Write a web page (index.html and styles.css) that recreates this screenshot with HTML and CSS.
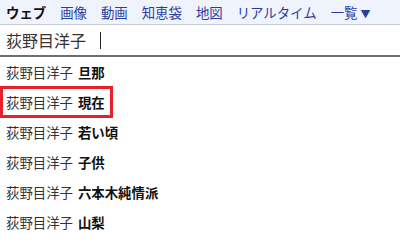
FILE: index.html
```html
<!DOCTYPE html>
<html lang="ja">
<head>
  <meta charset="UTF-8">
  <title>検索</title>
  <link rel="stylesheet" href="styles.css">
</head>
<body>
  <!-- Search tabs -->
  <div class="tabs">
    <span class="tab active">ウェブ</span>
    <span class="tab">画像</span>
    <span class="tab">動画</span>
    <span class="tab">知恵袋</span>
    <span class="tab">地図</span>
    <span class="tab">リアルタイム</span>
    <span class="tab">一覧<span class="arrow">▼</span></span>
  </div>

  <!-- Query box -->
  <div class="query">
    <span class="query-text">荻野目洋子</span>
    <span class="caret"></span>
  </div>

  <!-- Suggestions -->
  <ul class="suggest">
    <li><span class="item">荻野目洋子 <b>旦那</b></span></li>
    <li><span class="item marked">荻野目洋子 <b>現在</b></span></li>
    <li><span class="item">荻野目洋子 <b>若い頃</b></span></li>
    <li><span class="item">荻野目洋子 <b>子供</b></span></li>
    <li><span class="item">荻野目洋子 <b>六本木純情派</b></span></li>
    <li><span class="item">荻野目洋子 <b>山梨</b></span></li>
  </ul>
</body>
</html>
```

FILE: styles.css
```css
body {
  margin: 0;
  font-family: "Noto Sans CJK JP", sans-serif;
  background: #fff;
  color: #222;
}

/* Tab bar along the top */
.tabs {
  display: flex;
  align-items: center;
  gap: 14px;
  height: 24px;
  padding-left: 6px;
  background: #eff3fc;
  border-bottom: 1px solid #c8ccd6;
  font-size: 13.4px;
  color: #2a3c9c;
  white-space: nowrap;
}

.tab.active {
  color: #111;
  font-weight: bold;
}

.arrow {
  font-size: 10px;
  margin-left: 3px;
}

/* Query input row */
.query {
  display: flex;
  align-items: center;
  height: 30px;
  padding-left: 6px;
  border-bottom: 2px solid #6e6e6e;
  font-size: 16px;
  color: #333;
}

.caret {
  width: 1px;
  height: 17px;
  background: #222;
  margin-left: 14px;
}

/* Suggestion list */
.suggest {
  list-style: none;
  margin: 0;
  padding: 0;
}

.suggest li {
  height: 30px;
  display: flex;
  align-items: center;
  padding-left: 6px;
  font-size: 13.4px;
  color: #333;
}

.suggest b {
  color: #111;
  margin-left: 2px;
}

.item.marked {
  outline: 3px solid #e8202a;
  outline-offset: 3px;
  padding: 0 2px 0 0;
}
```
